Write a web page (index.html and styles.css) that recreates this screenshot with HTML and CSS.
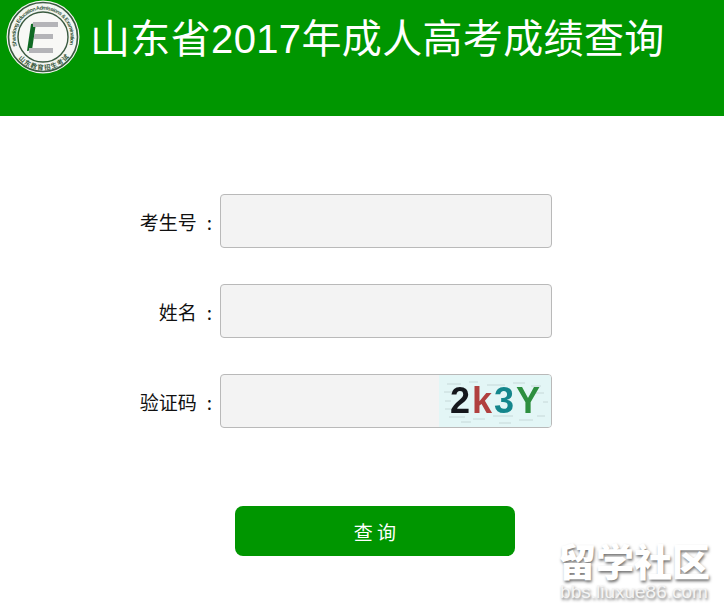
FILE: index.html
```html
<!DOCTYPE html>
<html>
<head>
    <meta charset="UTF-8">
    <meta name="viewport" content="width=device-width, initial-scale=1.0">
    <title>山东省2017年成人高考成绩查询</title>
    <link rel="stylesheet" href="styles.css">
</head>
<body>
    <div class="header">
        <svg class="logo" width="74" height="74" viewBox="0 0 74 74">
            <circle cx="37" cy="37" r="36.5" fill="#f4f6f2"/>
            <circle cx="37" cy="37" r="34.5" fill="none" stroke="#3a5a40" stroke-width="1.6"/>
            <circle cx="37" cy="37" r="25" fill="#f8f8f6" stroke="#3a5a40" stroke-width="1.4"/>
            <path id="logoArc" d="M11 46 A27.5 27.5 0 1 1 63 46" fill="none"/>
            <text class="logo-ring"><textPath href="#logoArc" textLength="103">Shandong Education Admissions &amp; Examination</textPath></text>
            <path id="logoArcLow" d="M11 57 A32.8 32.8 0 0 0 63 57" fill="none"/>
            <text class="logo-cn"><textPath href="#logoArcLow" startOffset="2" textLength="58">山东教育招生考试</textPath></text>
            <polygon points="25,24 30,23 26,50 21,51" fill="#0f6a24"/>
            <rect x="27" y="22" width="25" height="5" fill="#b4b4b8"/>
            <rect x="28" y="34" width="19" height="5" fill="#b4b4b8"/>
            <rect x="23" y="48" width="24" height="5" fill="#b4b4b8"/>
        </svg>
        <h1>山东省2017年成人高考成绩查询</h1>
    </div>

    <div class="form-section">
        <div class="form-group">
            <label for="examNo">考生号<span class="colon">:</span></label>
            <input type="text" id="examNo">
        </div>
        <div class="form-group">
            <label for="studentName">姓名<span class="colon">:</span></label>
            <input type="text" id="studentName">
        </div>
        <div class="form-group">
            <label for="captcha">验证码<span class="colon">:</span></label>
            <div class="captcha-box">
                <input type="text" id="captcha">
                <div class="captcha-img">
                    <svg class="captcha-noise" width="112" height="52" viewBox="0 0 112 52">
                        <g stroke="#b4c6c6" stroke-width="1" opacity="0.6">
                            <path d="M8 9h14M30 7h9M48 10h18M74 8h12M92 11h10"/>
                            <path d="M5 17h8M62 15h10M96 18h9"/>
                            <path d="M6 26h6M104 27h5M6 34h9"/>
                            <path d="M10 42h16M34 44h12M54 41h20M80 45h14M98 41h8"/>
                            <path d="M22 47h10M60 48h12"/>
                        </g>
                    </svg>
                    <span class="c1">2</span><span class="c2">k</span><span class="c3">3</span><span class="c4">Y</span>
                </div>
            </div>
        </div>
        <button>查 询</button>
    </div>

    <div class="watermark">
        <div class="wm-big">留学社区</div>
        <div class="wm-small">bbs.liuxue86.com</div>
    </div>
</body>
</html>
```

FILE: styles.css
```css
html, body {
    height: 100%;
}

body {
    font-family: "Noto Sans CJK SC", "Liberation Sans", sans-serif;
    background-color: white;
    margin: 0;
    overflow: hidden;
    position: relative;
}

.header {
    background-color: #009600;
    height: 116px;
    box-sizing: border-box;
    padding-left: 6px;
    display: flex;
    align-items: flex-start;
    gap: 10px;
}

.logo {
    flex: none;
}

.logo-ring {
    font-family: "Liberation Sans", sans-serif;
    font-size: 5.4px;
    font-weight: bold;
    fill: #3a5a40;
}

.logo-cn {
    font-family: "Noto Sans CJK SC", sans-serif;
    font-size: 6.5px;
    font-weight: bold;
    fill: #3a5a40;
}

h1 {
    margin: 11px 0 0;
    color: white;
    font-size: 40px;
    font-weight: 400;
    letter-spacing: 0.35px;
    line-height: 56px;
    white-space: nowrap;
    font-family: "Liberation Sans", "Noto Sans CJK SC", sans-serif;
}

.form-section {
    padding-top: 78px;
    display: flex;
    flex-direction: column;
    gap: 36px;
}

.form-group {
    display: flex;
    align-items: center;
    height: 54px;
}

label {
    width: 220px;
    box-sizing: border-box;
    padding-right: 8px;
    text-align: right;
    font-size: 19px;
    color: #111;
    white-space: nowrap;
}

.colon {
    margin-left: 10px;
}

input {
    width: 332px;
    height: 54px;
    box-sizing: border-box;
    background-color: #f3f3f3;
    border: 1px solid #b9b9b9;
    border-radius: 4px;
    padding: 0 8px;
    outline: none;
}

.captcha-box {
    position: relative;
    width: 332px;
    height: 54px;
}

.captcha-img {
    position: absolute;
    top: 1px;
    right: 1px;
    bottom: 1px;
    width: 112px;
    border-radius: 0 3px 3px 0;
    background-color: #e3f6f6;
    display: flex;
    align-items: center;
    justify-content: center;
    gap: 2px;
    font-family: "Liberation Sans", sans-serif;
    font-weight: bold;
    font-size: 36px;
    line-height: 1;
    overflow: hidden;
}

.captcha-img span {
    position: relative;
    filter: blur(0.5px);
}

.captcha-noise {
    position: absolute;
    top: 0;
    left: 0;
    filter: blur(0.6px);
}

.c1 { color: #15171c; }
.c2 { color: #b0403f; }
.c3 { color: #14868c; }
.c4 { color: #2d8f3f; }

button {
    display: block;
    width: 280px;
    height: 50px;
    margin: 42px 0 0 235px;
    background-color: #009600;
    color: white;
    border: none;
    border-radius: 8px;
    font-family: "Noto Sans CJK SC", sans-serif;
    font-size: 19px;
    cursor: pointer;
}

.watermark {
    position: absolute;
    right: 12px;
    bottom: 12px;
    width: 156px;
    text-align: center;
    color: white;
    text-shadow: 1px 2px 3px rgba(0, 0, 0, 0.55);
}

.wm-big {
    font-size: 38px;
    font-weight: 900;
    line-height: 40px;
    margin-bottom: 4px;
    white-space: nowrap;
}

.wm-small {
    font-family: "Liberation Sans", sans-serif;
    font-size: 19px;
    line-height: 16px;
    white-space: nowrap;
    color: #f4f4f4;
}
```
